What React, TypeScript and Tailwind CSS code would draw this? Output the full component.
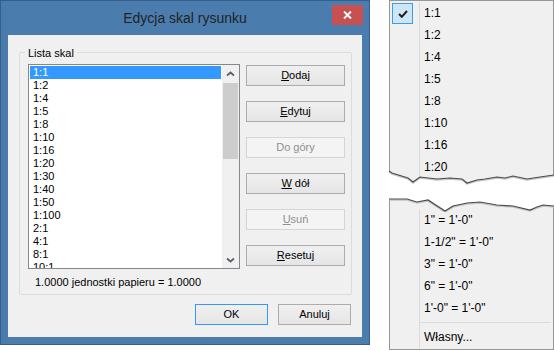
import React from 'react';

const scales = ['1:1', '1:2', '1:4', '1:5', '1:8', '1:10', '1:16', '1:20', '1:30', '1:40', '1:50', '1:100', '2:1', '4:1', '8:1', '10:1'];
const menuTop = ['1:1', '1:2', '1:4', '1:5', '1:8', '1:10', '1:16', '1:20'];
const menuBottom = ['1" = 1\'-0"', '1-1/2" = 1\'-0"', '3" = 1\'-0"', '6" = 1\'-0"', '1\'-0" = 1\'-0"'];

// jagged tear lines, coords relative to the menu's left outer edge
const tearTop = '0,1 3,3 19,8 24,12 31,7 48,9 61,8 73,9 78,13 88,10 96,9 108,7 116,8 124,6 138,9 151,7 165,5';
const tearBottom = '0,3 18,3 28,6 39,4 56,15 64,10 78,7 91,6 108,9 124,10 141,14 148,11 154,9 165,10';

interface BtnProps {
  children: React.ReactNode;
  disabled?: boolean;
  primary?: boolean;
  wide?: boolean;
}

function Btn({ children, disabled, primary, wide }: BtnProps) {
  const base = 'h-[21px] flex items-center justify-center border text-[11px] leading-none';
  const size = wide ? 'w-[99px]' : 'w-[73px]';
  const look = disabled
    ? 'border-[#d5d5d5] bg-[#f4f4f4] text-[#8f8f8f]'
    : primary
      ? 'border-[#3399ff] bg-linear-to-b from-[#f0f0f0] to-[#e5e5e5] text-black'
      : 'border-[#acacac] bg-linear-to-b from-[#f0f0f0] to-[#e5e5e5] text-black';
  return <div className={`${base} ${size} ${look}`}>{children}</div>;
}

const Chevron = ({ down }: { down?: boolean }) => (
  <svg width="9" height="6" viewBox="0 0 9 6">
    <path d={down ? 'M1 1.5 L4.5 4.5 L8 1.5' : 'M1 4.5 L4.5 1.5 L8 4.5'} fill="none" stroke="#606060" strokeWidth="1.8" />
  </svg>
);

function Dialog() {
  return (
    <div className="w-[370px] h-[345px] bg-[#4a7dae] border border-[#345f8b] flex flex-col">
      {/* Title bar */}
      <div className="h-[34px] flex items-start">
        <div className="flex-1 pl-[37px] pt-[9px] text-center text-[14px] leading-[17px] text-[#222]">
          Edycja skal rysunku
        </div>
        <div className="mt-[4px] mr-[6px] w-[31px] h-[20px] bg-[#c75050] flex items-center justify-center">
          <svg width="9" height="8" viewBox="0 0 9 8">
            <path d="M1 0.5 L8 7.5 M8 0.5 L1 7.5" stroke="white" strokeWidth="1.9" />
          </svg>
        </div>
      </div>

      {/* Client area */}
      <div className="mx-[7px] h-[302px] bg-[#f0f0f0] pl-[11px] pt-[17px] flex flex-col">
        <div className="w-[333px] h-[243px] border border-[#dcdcdc] rounded-[2px] pl-[8px] flex flex-col">
          <div className="-mt-[7px] -ml-[3px] px-[3px] w-fit h-[15px] leading-[15px] bg-[#f0f0f0] text-[11px]">Lista skal</div>

          <div className="mt-[3px] flex gap-[6px]">
            {/* List box */}
            <div className="w-[212px] h-[205px] border border-[#828790] bg-white flex">
              <div className="flex-1 p-[1px] overflow-hidden flex flex-col">
                {scales.map((s, i) => (
                  <div
                    key={s}
                    className={`h-[13px] shrink-0 leading-[13px] pl-[3px] text-[11px] ${i === 0 ? 'bg-[#3399ff] text-white' : 'text-black'}`}
                  >
                    {s}
                  </div>
                ))}
              </div>
              <div className="w-[17px] bg-[#f0f0f0] flex flex-col">
                <div className="h-[17px] flex items-center justify-center"><Chevron /></div>
                <div className="flex-1 px-[1px] pt-[1px]">
                  <div className="h-[76px] bg-[#cdcdcd]" />
                </div>
                <div className="h-[17px] flex items-center justify-center"><Chevron down /></div>
              </div>
            </div>

            {/* Buttons */}
            <div className="pt-[1px] flex flex-col gap-[15px]">
              <Btn wide><span className="underline">D</span>odaj</Btn>
              <Btn wide><span className="underline">E</span>dytuj</Btn>
              <Btn wide disabled>Do&nbsp;<span className="underline">g</span>óry</Btn>
              <Btn wide><span className="underline">W</span>&nbsp;dół</Btn>
              <Btn wide disabled><span className="underline">U</span>suń</Btn>
              <Btn wide><span className="underline">R</span>esetuj</Btn>
            </div>
          </div>

          <div className="mt-[6px] pl-[7px] text-[11px] leading-[15px]">1.0000 jednostki papieru = 1.0000</div>
        </div>

        <div className="mt-[9px] w-[333px] pr-[1px] flex justify-end gap-[10px]">
          <Btn primary>OK</Btn>
          <Btn>Anuluj</Btn>
        </div>
      </div>
    </div>
  );
}

function MenuRow({ label, checked }: { label: string; checked?: boolean }) {
  return (
    <div className="h-[22px] flex">
      <div className="w-[29px] shrink-0 pl-[2px] pt-[1px]">
        {checked && (
          <div className="w-[21px] h-[21px] bg-[#cde6f7] border border-[#3d9ee0] flex items-center justify-center">
            <svg width="10" height="8" viewBox="0 0 10 8">
              <path d="M1 4 L3.8 6.8 L9 1" fill="none" stroke="#1e1e1e" strokeWidth="2" />
            </svg>
          </div>
        )}
      </div>
      <div className="flex-1 border-l border-[#dadada] pl-[4px] leading-[22px]">{label}</div>
    </div>
  );
}

function ScaleMenu() {
  return (
    <div className="ml-[19px] w-[165px] flex flex-col text-[12px] text-black">
      {/* upper part */}
      <div className="relative h-[186px] bg-[#f0f0f0] border-x border-t border-[#979797] pt-[1px] flex flex-col">
        {menuTop.map((m, i) => (
          <MenuRow key={m} label={m} checked={i === 0} />
        ))}
        <div className="flex-1 flex">
          <div className="w-[29px]" />
          <div className="flex-1 border-l border-[#dadada]" />
        </div>
        <svg className="absolute bottom-0 -left-px" width="165" height="16" viewBox="0 0 165 16">
          <polygon points={`${tearTop} 165,16 0,16`} fill="white" />
          <polyline points={tearTop} transform="translate(0,1)" fill="none" stroke="#c4c4c4" strokeWidth="1.5" />
          <polyline points={tearTop} fill="none" stroke="#4a4a4a" strokeWidth="1.2" />
        </svg>
      </div>

      {/* lower part */}
      <div className="relative mt-[10px] bg-[#f0f0f0] border-x border-b border-[#979797] pt-[13px] pb-[1px] flex flex-col">
        <svg className="absolute top-0 -left-px" width="165" height="16" viewBox="0 0 165 16">
          <polygon points={`0,0 165,0 ${tearBottom.split(' ').reverse().join(' ')}`} fill="white" />
          <polyline points={tearBottom} transform="translate(0,1)" fill="none" stroke="#c4c4c4" strokeWidth="1.5" />
          <polyline points={tearBottom} fill="none" stroke="#4a4a4a" strokeWidth="1.2" />
        </svg>
        {menuBottom.map((m) => (
          <MenuRow key={m} label={m} />
        ))}
        <div className="h-[7px] flex">
          <div className="w-[29px]" />
          <div className="flex-1 border-l border-[#dadada] pt-[3px] pr-[2px]">
            <div className="h-px bg-[#dadada]" />
          </div>
        </div>
        <MenuRow label="Własny..." />
      </div>
    </div>
  );
}

export default function App() {
  return (
    <div className="w-[554px] h-[351px] bg-white flex items-start font-['Liberation_Sans',Arial,sans-serif]">
      <Dialog />
      <ScaleMenu />
    </div>
  );
}
